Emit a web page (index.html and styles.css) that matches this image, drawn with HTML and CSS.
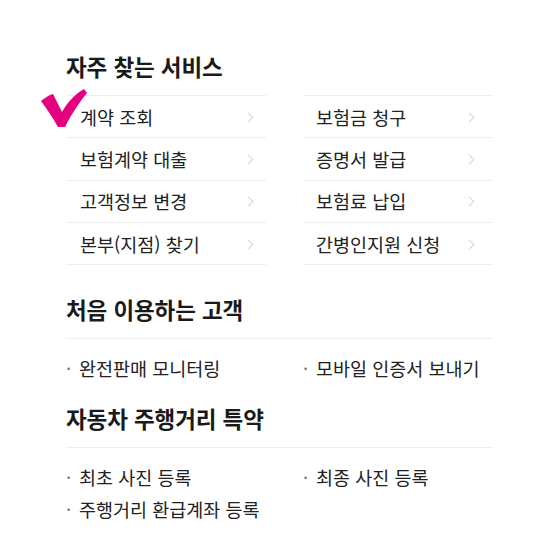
FILE: index.html
```html
<!DOCTYPE html>
<html lang="ko">
<head>
<meta charset="utf-8">
<link rel="stylesheet" href="styles.css">
</head>
<body>
<div class="page">
  <section class="sec sec-first">
    <h2 class="title">자주 찾는 서비스</h2>
    <div class="menu-grid">
      <ul class="menu menu-left">
        <li><span>계약 조회</span><i class="chev"></i></li>
        <li><span>보험계약 대출</span><i class="chev"></i></li>
        <li><span>고객정보 변경</span><i class="chev"></i></li>
        <li><span>본부(지점) 찾기</span><i class="chev"></i></li>
      </ul>
      <ul class="menu menu-right">
        <li><span>보험금 청구</span><i class="chev"></i></li>
        <li><span>증명서 발급</span><i class="chev"></i></li>
        <li><span>보험료 납입</span><i class="chev"></i></li>
        <li><span>간병인지원 신청</span><i class="chev"></i></li>
      </ul>
    </div>
    <svg class="check" width="50" height="44" viewBox="0 0 50 44"><path d="M1 13 C5 10 9 7 13 6 C16 12 19 18 22 24 C27 15 34 7 44 1 L47 5 C41 12 32 25 25 39 L18 39 C13 30 7 21 1 13 Z" fill="#e4007f"/></svg>
  </section>
  <section class="sec sec-second">
    <h2 class="title title-line">처음 이용하는 고객</h2>
    <ul class="dots">
      <li>완전판매 모니터링</li>
      <li>모바일 인증서 보내기</li>
    </ul>
  </section>
  <section class="sec sec-third">
    <h2 class="title title-line">자동차 주행거리 특약</h2>
    <ul class="dots">
      <li>최초 사진 등록</li>
      <li>최종 사진 등록</li>
      <li>주행거리 환급계좌 등록</li>
    </ul>
  </section>
</div>
</body>
</html>
```
FILE: styles.css
```css
* { box-sizing: border-box; }
html, body { margin: 0; padding: 0; background: #fff; }
body {
  font-family: "Noto Sans CJK KR", "Noto Sans", sans-serif;
  color: #222;
}
.page {
  width: 426px;
  margin-left: 66px;
  padding-top: 51px;
}
.sec { position: relative; }
.title {
  margin: 0;
  font-size: 22.5px;
  line-height: 30px;
  font-weight: 700;
  color: #1a1a1a;
  letter-spacing: -0.1px;
}
.sec-first .title { margin-bottom: 14px; }
.title-line {
  padding-bottom: 14px;
  border-bottom: 1px solid #eeeeee;
}
.menu-grid {
  display: grid;
  grid-template-columns: 200px 189px;
  column-gap: 37px;
}
.menu {
  list-style: none;
  margin: 0;
  padding: 0;
  border-bottom: 1px solid #eeeeee;
}
.menu li {
  height: 42.3px;
  border-top: 1px solid #eeeeee;
  display: flex;
  align-items: center;
  justify-content: space-between;
  font-size: 18.5px;
  color: #222;
  padding-left: 14px;
}
.menu-left li { padding-right: 14px; }
.menu-right li { padding-left: 13px; padding-right: 19px; }
.chev {
  width: 7px;
  height: 7px;
  border-top: 1.5px solid #d4d4d4;
  border-right: 1.5px solid #d4d4d4;
  transform: rotate(45deg);
  margin-top: 1px;
}
.check {
  position: absolute;
  left: -26px;
  top: 37px;
}
.sec-second { margin-top: 29px; }
.sec-third { margin-top: 19px; }
.dots {
  list-style: none;
  margin: 0;
  padding: 13px 0 0;
  display: grid;
  grid-template-columns: 237px 189px;
}
.dots li {
  font-size: 18.5px;
  line-height: 32px;
  color: #222;
  display: flex;
}
.dots li::before {
  content: "·";
  width: 13px;
  color: #777;
  flex: none;
}
```
